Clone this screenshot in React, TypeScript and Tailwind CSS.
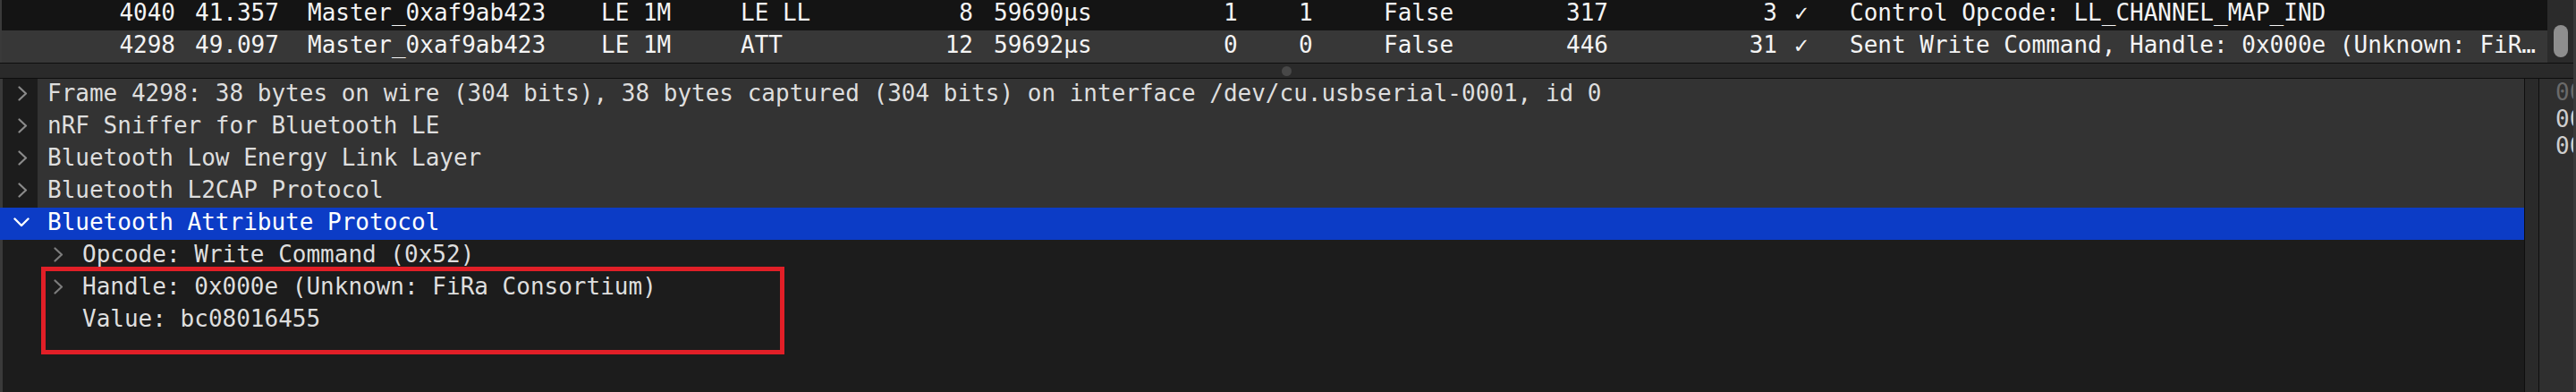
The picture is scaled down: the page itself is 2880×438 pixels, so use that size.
import React from 'react';

interface Packet {
  no: string;
  time: string;
  source: string;
  phy: string;
  protocol: string;
  length: string;
  delta: string;
  a: string;
  b: string;
  crc: string;
  event: string;
  hdr: string;
  info: string;
  selected?: boolean;
}

const packets: Packet[] = [
  { no: '4040', time: '41.357', source: 'Master_0xaf9ab423', phy: 'LE 1M', protocol: 'LE LL', length: '8', delta: '59690µs', a: '1', b: '1', crc: 'False', event: '317', hdr: '3', info: 'Control Opcode: LL_CHANNEL_MAP_IND' },
  { no: '4298', time: '49.097', source: 'Master_0xaf9ab423', phy: 'LE 1M', protocol: 'ATT', length: '12', delta: '59692µs', a: '0', b: '0', crc: 'False', event: '446', hdr: '31', info: 'Sent Write Command, Handle: 0x000e (Unknown: FiR…', selected: true },
];

const topTree = [
  'Frame 4298: 38 bytes on wire (304 bits), 38 bytes captured (304 bits) on interface /dev/cu.usbserial-0001, id 0',
  'nRF Sniffer for Bluetooth LE',
  'Bluetooth Low Energy Link Layer',
  'Bluetooth L2CAP Protocol',
];

const ChevronRight = ({ color = '#8a8a8a' }: { color?: string }) => (
  <svg width="11" height="17" viewBox="0 0 11 17" className="shrink-0">
    <polyline points="1.5,1.5 9,8.5 1.5,15.5" fill="none" stroke={color} strokeWidth="2.2" strokeLinecap="round" strokeLinejoin="round" />
  </svg>
);

const ChevronDown = () => (
  <svg width="18" height="11" viewBox="0 0 18 11" className="shrink-0">
    <polyline points="1.5,1.5 9,9 16.5,1.5" fill="none" stroke="#ffffff" strokeWidth="2.4" strokeLinecap="round" strokeLinejoin="round" />
  </svg>
);

const PacketRow = ({ p }: { p: Packet }) => (
  <div className={`flex h-[36px] leading-[32px] whitespace-pre text-[#f4f4f4] ${p.selected ? 'bg-[#373737]' : 'bg-[#141414]'}`}>
    <div className="w-[194px] shrink-0 text-right">{p.no}</div>
    <div className="w-[148px] shrink-0 pl-[22px]">{p.time}</div>
    <div className="w-[328px] shrink-0">{p.source}</div>
    <div className="w-[156px] shrink-0">{p.phy}</div>
    <div className="w-[160px] shrink-0">{p.protocol}</div>
    <div className="w-[100px] shrink-0 text-right">{p.length}</div>
    <div className="w-[280px] shrink-0 pl-[23px]">{p.delta}</div>
    <div className="w-[84px] shrink-0">{p.a}</div>
    <div className="w-[95px] shrink-0">{p.b}</div>
    <div className="w-[204px] shrink-0">{p.crc}</div>
    <div className="w-[140px] shrink-0">{p.event}</div>
    <div className="w-[96px] shrink-0 text-right">{p.hdr}</div>
    <div className="w-[81px] shrink-0 pl-[19px]">✓</div>
    <div className="flex-1 overflow-hidden">{p.info}</div>
  </div>
);

export default function App() {
  return (
    <div className="w-[2880px] h-[438px] overflow-hidden bg-[#1c1c1c] border-r-[3px] border-[#3a3a3a] font-['DejaVu_Sans_Mono','Liberation_Mono',monospace] text-[26px]">
      {/* packet list */}
      <div className="flex h-[70px] overflow-hidden border-l-[2px] border-[#3a3a3a]">
        <div className="flex-1 -mt-[2px]">
          {packets.map(p => <PacketRow key={p.no} p={p} />)}
        </div>
        <div className="w-[29px] shrink-0 bg-[#2b2b2b] pt-[28px] pl-[7px]">
          <div className="w-[16px] h-[36px] rounded-full bg-[#8e8e8e]" />
        </div>
      </div>

      {/* splitter */}
      <div className="h-[18px] border-y border-[#0e0e0e] bg-[#2a2a2a] flex items-center justify-center">
        <div className="w-[11px] h-[11px] rounded-full bg-[#484848]" />
      </div>

      {/* lower panes */}
      <div className="flex h-[350px]">
        <div className="relative w-[2823px] shrink-0 border-r border-[#0e0e0e] bg-[#1c1c1c] border-l-[3px] border-l-[#3a3a3a] text-[#dedede] whitespace-pre">
          {topTree.map(t => (
            <div key={t} className="flex h-[36px] leading-[32px]">
              <div className="w-[39px] shrink-0 bg-[#1c1c1c] flex items-center pl-[17px] pb-[4px]">
                <ChevronRight />
              </div>
              <div className="flex-1 bg-[#333333] pl-[11px]">{t}</div>
            </div>
          ))}
          <div className="flex items-center h-[36px] leading-[32px] bg-[#0c3cc6] text-white -ml-[3px]">
            <div className="w-[53px] shrink-0 pl-[15px] pb-[4px] flex items-center">
              <ChevronDown />
            </div>
            <div className="self-start">Bluetooth Attribute Protocol</div>
          </div>
          <div className="flex h-[36px] leading-[32px]">
            <div className="w-[89px] shrink-0 pl-[57px] pb-[4px] flex items-center">
              <ChevronRight color="#7c7c7c" />
            </div>
            <div>Opcode: Write Command (0x52)</div>
          </div>
          <div className="flex h-[36px] leading-[32px]">
            <div className="w-[89px] shrink-0 pl-[57px] pb-[4px] flex items-center">
              <ChevronRight color="#7c7c7c" />
            </div>
            <div>Handle: 0x000e (Unknown: FiRa Consortium)</div>
          </div>
          <div className="flex h-[36px] leading-[32px]">
            <div className="w-[89px] shrink-0" />
            <div>Value: bc08016455</div>
          </div>

          {/* annotation box */}
          <div className="absolute left-[43px] top-[210px] w-[831px] h-[98px] border-[5px] border-[#e11f27]" />
        </div>
        <div className="w-[15px] shrink-0 bg-[#2a2a2a]" />
        <div className="flex-1 border-l border-[#0e0e0e] bg-[#2f2f2f] pl-[18px] leading-[30px] whitespace-pre">
          <div className="text-[#6a6a6a]">0000</div>
          <div className="text-[#cfcfcf]">0010</div>
          <div className="text-[#cfcfcf]">0020</div>
        </div>
      </div>
    </div>
  );
}
